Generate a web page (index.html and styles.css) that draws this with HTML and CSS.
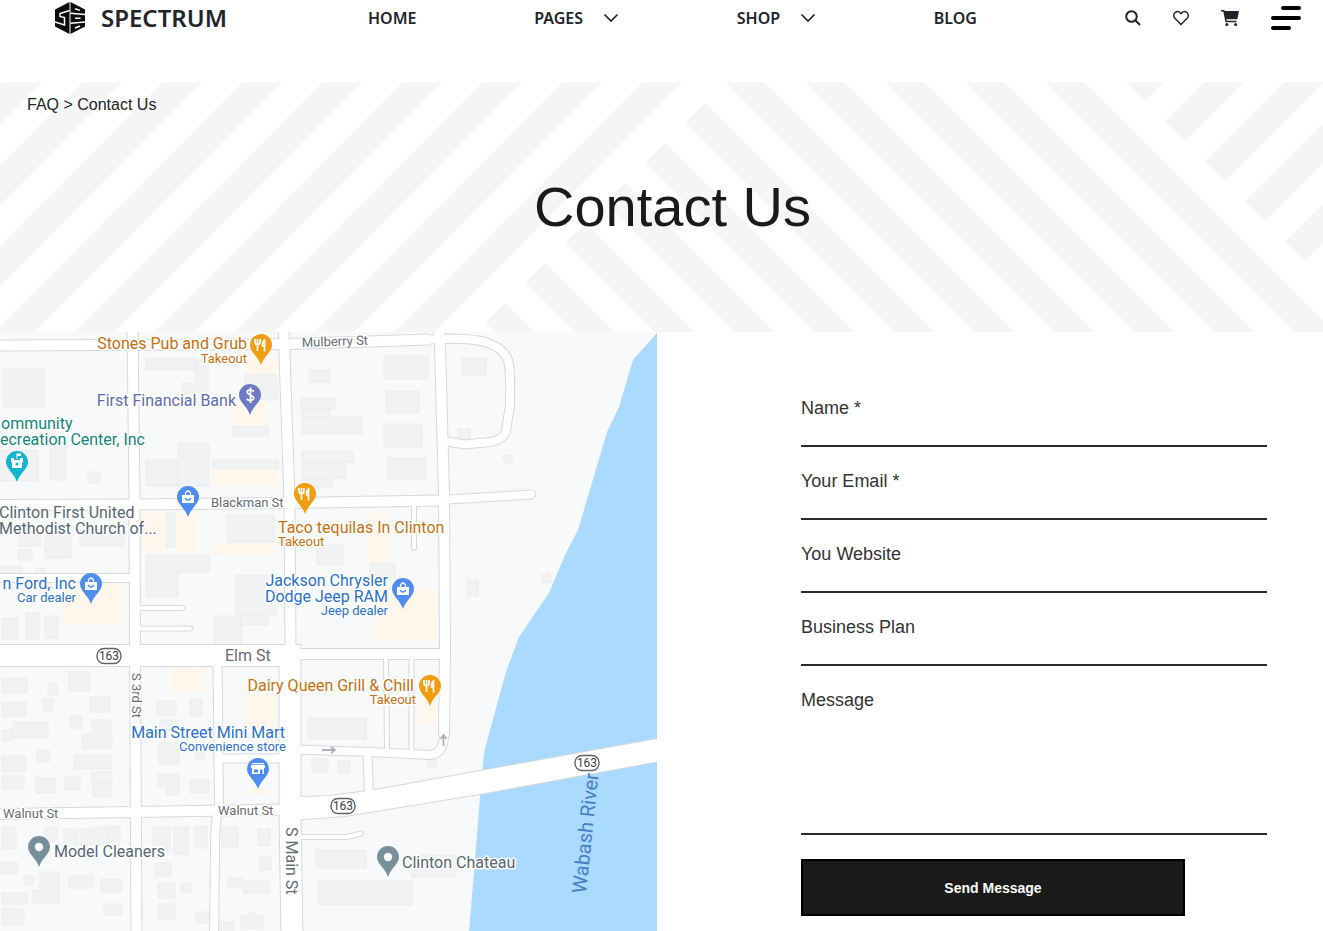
FILE: index.html
```html
<!DOCTYPE html>
<html lang="en">
<head>
<meta charset="utf-8">
<meta name="viewport" content="width=device-width, initial-scale=1">
<title>Contact Us - Spectrum</title>
<link rel="stylesheet" href="styles.css">
</head>
<body>
<header class="header">
  <a class="brand" href="#">
    <svg class="brand-mark" viewBox="0 0 30 32" aria-hidden="true">
      <path d="M14.500 0V32L0 24.500V7.500Z M15.500 0 30 7.500V24.500L15.500 32Z"/>
      <path class="cut" d="M14.500 8.500 5 11.500V14.500L9.500 15.500V23L0 20M15.500 11.200 30 12.500M15.500 21.200 30 20M20 6.800 25 8.400M20 16.300H25.500M20 26 25 24"/>
    </svg>
    <span class="brand-name">SPECTRUM</span>
  </a>
  <nav class="nav" aria-label="Main">
    <a class="nav-link" href="#">HOME</a>
    <a class="nav-link" href="#">PAGES
      <svg class="chevron" viewBox="0 0 16 10" aria-hidden="true"><path d="M1.500 1.500 8 8 14.500 1.500"/></svg></a>
    <a class="nav-link" href="#">SHOP
      <svg class="chevron" viewBox="0 0 16 10" aria-hidden="true"><path d="M1.500 1.500 8 8 14.500 1.500"/></svg></a>
    <a class="nav-link" href="#">BLOG</a>
  </nav>
  <div class="tools">
    <button class="tool" type="button" aria-label="Search">
      <svg viewBox="0 0 16 16"><circle class="line thick" cx="6.500" cy="6.500" r="5.300"/><path class="line thick" d="M10.500 10.500 15 15"/></svg>
    </button>
    <button class="tool" type="button" aria-label="Wishlist">
      <svg viewBox="0 0 16 16"><path class="line" d="M8 14.500 1.900 8.300C.3 6.600.4 4 2.100 2.500 3.800 1.100 6.100 1.400 7.500 3L8 3.600 8.500 3C9.900 1.400 12.200 1.100 13.900 2.500 15.600 4 15.700 6.600 14.100 8.300Z"/></svg>
    </button>
    <button class="tool tool-cart" type="button" aria-label="Cart">
      <svg viewBox="0 0 18 16"><path d="M0 0H3.200L3.700 1H18L16.300 9.300H5.400L5.700 10.800H15.500V12.200H4.500L2.300 1.400H0Z"/><circle cx="5.800" cy="14.400" r="1.500"/><circle cx="14.600" cy="14.400" r="1.500"/></svg>
    </button>
    <button class="tool tool-menu" type="button" aria-label="Menu">
      <svg viewBox="0 0 30 24"><path class="bars" d="M12 2H28M2 12H28M2 22H18"/></svg>
    </button>
  </div>
</header>

<section class="hero">
  <svg class="hero-pattern" viewBox="0 0 1323 250" preserveAspectRatio="xMidYMin slice" aria-hidden="true">
    <defs>
      <path id="fall" d="M0 0H39.500L289.500 250H250Z"/>
      <path id="rise" d="M0 0H39.500L-209 250H-248.500Z"/>
      <clipPath id="mid"><path d="M726.500 0H1323V250H476.500Z"/></clipPath>
      <clipPath id="right"><path d="M1126 0H1323V197Z"/></clipPath>
    </defs>
    <use href="#rise" x="3"/><use href="#rise" x="83"/><use href="#rise" x="163"/><use href="#rise" x="243"/><use href="#rise" x="323"/><use href="#rise" x="403"/><use href="#rise" x="483"/><use href="#rise" x="563"/><use href="#rise" x="643"/>
    <g clip-path="url(#mid)">
      <use href="#fall" x="245"/><use href="#fall" x="325"/><use href="#fall" x="405"/><use href="#fall" x="485"/><use href="#fall" x="565"/><use href="#fall" x="645"/><use href="#fall" x="725"/><use href="#fall" x="805"/><use href="#fall" x="885"/><use href="#fall" x="965"/><use href="#fall" x="1045"/>
    </g>
    <g clip-path="url(#right)">
      <use href="#rise" x="1124"/><use href="#rise" x="1204"/><use href="#rise" x="1284"/><use href="#rise" x="1364"/><use href="#rise" x="1444"/>
    </g>
  </svg>
  <nav class="crumbs" aria-label="Breadcrumb"><a href="#">FAQ</a> &gt; Contact Us</nav>
  <h1 class="title">Contact Us</h1>
</section>

<main class="contact">
  <div class="map">
    <svg viewBox="0 332 657 599" preserveAspectRatio="xMinYMin slice" role="img" aria-label="Map of Clinton">
      <defs>
        <g id="pin"><path d="M-11 0A11 11 0 0 1 11 0C11 7 3 11 0 20-3 11-11 7-11 0Z"/></g>
        <g id="food"><use href="#pin" fill="#f09d0f"/><path d="M-6-6V-2.500Q-6-.5-3.500-.5-1-.5-1-2.500V-6M-3.500-6V6M3.500 6.500V-5Q1.500-4 1.500 1H3.500" fill="none" stroke="#fff" stroke-width="1.700"/></g>
        <g id="bag"><use href="#pin" fill="#4f8df0"/><path d="M-6-2H6V6H-6Z" fill="#fff"/><path d="M-2.500-2V-4Q0-8 2.500-4V-2" fill="none" stroke="#fff" stroke-width="1.300"/><path d="M-3 1Q0 5 3 1" fill="none" stroke="#4f8df0" stroke-width="1.300"/></g>
        <g id="dot"><use href="#pin" fill="#78909c"/><circle r="4.200" fill="#fff"/></g>
        <g id="shield"><rect x="-12" y="-7.500" width="24" height="15" rx="7" fill="#fff" stroke="#5f6368" stroke-width="1.400"/></g>
        <g id="roads">
          <g class="street">
            <path d="M-5 345.500 290 344 430 339.500"/>
            <path d="M439 325 440 345 444 495 445 650 444 735"/>
            <path d="M-5 505 135 504.500 290 503 440 500.500"/>
            <path d="M284 654H445"/>
            <path d="M-5 814 135 812 290 809.500"/>
            <path d="M132.500 325 134.500 500 135 650 136.500 940M283.500 325 289.500 500 290.500 650"/>
          </g>
          <path class="avenue" d="M-5 655.500H290V810L292 940"/>
          <path class="lane" d="M430 339.500Q472 337 488 343 503 348 508 360 511 370 510 405L506 431Q503 440 490 442L465 444.500 444 441M440 500 531 494.500M-5 578H135M217.500 660 219 805Q215 820 215 850L214 940M220 758.500H285M295 749.500 370 752 430 755Q444 753 444 735M367.500 754 369 795"/>
          <path class="alley" d="M138 608H182M138 628.500H190M386 658 387 750M411.500 658V750M414 502V548M300 837H345Q352 836 361 833.500"/>
        </g>
        <path id="bridge" d="M292 797.500 330 796 375 790 483 770.500 660 738.500V761L480 794 345 816 292 820Z"/>
      </defs>
      <rect y="332" width="657" height="599" fill="#f8f9fb"/>
      <path fill="#f1f2f3" stroke="#ebecee" d="M3 369h41v38h-41zM0 450h38v31h-38zM50 446h16v34h-16zM88 472h12v11h-12zM146 358h50v12h-50zM195 360h13v32h-13zM182 383h11v10h-11zM245 374h32v26h-32zM232 426h36v10h-36zM146 460h32v26h-32zM178 443h31v43h-31zM212 460h66v9h-66zM309 370h21v12h-21zM301 398h34v11h-34zM302 409h28v9h-28zM302 417h60v17h-60zM302 451h51v11h-51zM302 462h43v16h-43zM302 478h31v9h-31zM384 356h44v23h-44zM386 391h33v22h-33zM384 424h38v23h-38zM388 458h38v21h-38zM462 358h24v17h-24zM458 429h12v10h-12zM503 456l8-1 2 7-8 2zM166 513h10v34h-10zM227 515h47v27h-47zM146 555h63v17h-63zM146 563h32v34h-32zM236 575h40v40h-40zM215 616h26v27h-26zM241 616h27v9h-27zM19 535h22v11h-22zM45 530h26v28h-26zM80 530h44v16h-44zM18 550h14v10h-14zM0 566h22v10h-22zM36 568h9v9h-9zM2 618h15v21h-15zM26 613h13v26h-13zM45 616h13v22h-13zM317 545h26v20h-26zM370 563h25v15h-25zM467 580h11v16h-11zM542 575l8-2 1 9-8 1zM2 678h25v15h-25zM48 683h9v12h-9zM69 672h21v19h-21zM2 702h24v14h-24zM43 699h10v12h-10zM90 697h20v15h-20zM13 722h35v16h-35zM70 716h12v12h-12zM92 720h19v12h-19zM82 734h30v14h-30zM157 701h19v14h-19zM190 699h12v17h-12zM160 720h18v10h-18zM308 718h58v21h-58zM2 730h11v10h-11zM2 756h23v15h-23zM37 750h12v12h-12zM74 755h37v14h-37zM2 776h22v13h-22zM36 778h19v15h-19zM65 776h15v14h-15zM91 772h21v10h-21zM93 782h18v15h-18zM159 743h20v21h-20zM196 752h9v8h-9zM158 774h21v12l-1 9h-12v-9h-8zM190 780h19v13h-19zM312 759h16v13h-16zM338 761h12v12h-12zM2 827h14v22h-14zM45 827h12v14h-12zM64 829h13v20h-13zM80 829h12v16h-12zM94 827h13v18h-13zM109 826h11v19h-11zM0 862h17v12h-17zM24 876h9v9h-9zM40 872h19v31h-26v-13h7zM69 876h24v12h-24zM101 879h20v13h-20zM104 904h17v11h-17zM2 893h25v11h-25zM2 909h22v16h-22zM153 827h17v24h-17zM174 827h14v27h-14zM195 826h12v22h-12zM155 863h16v13h-16zM158 883h17v15h-17zM181 883h10v9h-10zM158 904h17v15h-17zM196 912h12v11h-12zM222 827h16v20h-16zM258 829h12v17h-12zM260 857h11v13h-11zM228 878h14v9h-14zM244 881h25v12h-25zM241 928v-12h6l5-5 5 5h6v12zM220 922h14v12h-14zM316 850h50v18h-50zM412 855h44v22h-44zM319 881h93v24h-93zM428 758h8v8h-8z"/>
      <path fill="#fff6ec" d="M245 358h32v16h-32zM232 402h36v24h-36zM212 469h66v17h-66zM142 513h24v38h-24zM176 513h22v40h-22zM212 543h62v12h-62zM62 582h62v43h-62zM367 513h22v50h-22zM372 588h64v52h-64zM170 668h33v24h-33zM245 694h30v36h-30zM419 700h17v26h-17zM248 788h20v7h-20z"/>
      <path fill="#aadaff" d="M657 333 633 360 619 407 607 432 578 530 565 555 549 593 519 637 506 672 490 730 484 753 480 797 475 860 469 932H657Z"/>
      <g class="roads-edge"><use href="#roads"/><use href="#bridge"/></g>
      <g class="roads-fill"><use href="#roads"/></g>
      <use href="#bridge" fill="#fff"/>
      <path d="M322 750H335M331 747 335 750 331 753M443.500 746V735M440.500 739 443.500 735 446.500 739" fill="none" stroke="#aeb1b5" stroke-width="1.800"/>

      <use href="#food" x="261" y="345"/><use href="#food" x="305" y="494"/><use href="#food" x="430" y="686"/>
      <use href="#bag" x="188" y="497"/><use href="#bag" x="91" y="584"/><use href="#bag" x="403" y="589"/>
      <use href="#dot" x="39" y="847"/><use href="#dot" x="388" y="857"/>
      <use href="#pin" x="250" y="395" fill="#6f79c4"/>
      <path d="M254 391.500Q250.500 389 248 390.500 245.500 393 250.500 395 255 397 253 399.500 250 401.500 246.500 399M250.500 387.500V403" fill="none" stroke="#fff" stroke-width="1.800"/>
      <use href="#pin" x="17" y="462" fill="#12b5cb"/>
      <path d="M11 458H14V460H20V458H23V462L22 463V468H12V463L11 462ZM16.500 459V453.500H21V456H17.500V459Z" fill="#fff"/><circle cx="17" cy="464" r="1.600" fill="#12b5cb"/>
      <use href="#pin" x="258" y="769" fill="#4f8df0"/>
      <path d="M252 763H264V764.200H252ZM251 765H265V768H251ZM252 768H264V774H252Z" fill="#fff"/><path d="M254 769.500H258V772.500H254ZM260 769.500H262.500V774H260Z" fill="#4f8df0"/>

      <g class="place food-text">
        <text x="247" y="349" text-anchor="end">Stones Pub and Grub</text>
        <text class="small" x="247" y="363" text-anchor="end">Takeout</text>
        <text x="278" y="533">Taco tequilas In Clinton</text>
        <text class="small" x="278" y="546">Takeout</text>
        <text x="414" y="691" text-anchor="end">Dairy Queen Grill &amp; Chill</text>
        <text class="small" x="416" y="704" text-anchor="end">Takeout</text>
      </g>
      <g class="place bank-text"><text x="236" y="406" text-anchor="end">First Financial Bank</text></g>
      <g class="place civic-text">
        <text x="1" y="429">ommunity</text><text x="0" y="445">ecreation Center, Inc</text>
      </g>
      <g class="place shop-text">
        <text x="388" y="586" text-anchor="end">Jackson Chrysler</text>
        <text x="388" y="602" text-anchor="end">Dodge Jeep RAM</text>
        <text class="small" x="388" y="615" text-anchor="end">Jeep dealer</text>
        <text x="76" y="589" text-anchor="end">n Ford, Inc</text>
        <text class="small" x="76" y="602" text-anchor="end">Car dealer</text>
        <text x="285" y="738" text-anchor="end">Main Street Mini Mart</text>
        <text class="small" x="286" y="751" text-anchor="end">Convenience store</text>
      </g>
      <g class="place plain-text">
        <text x="-1" y="518">Clinton First United</text>
        <text x="-1" y="534">Methodist Church of...</text>
        <text x="54" y="857">Model Cleaners</text>
        <text x="402" y="868">Clinton Chateau</text>
      </g>
      <g class="place street-text">
        <text class="small" x="302" y="347" transform="rotate(-2 302 347)">Mulberry St</text>
        <text class="small" x="211" y="507">Blackman St</text>
        <text x="225" y="661">Elm St</text>
        <text class="small" x="3" y="818">Walnut St</text>
        <text class="small" x="218" y="815">Walnut St</text>
        <text class="small" transform="translate(132 673) rotate(90)">S 3rd St</text>
        <text transform="translate(286 827) rotate(90)">S Main St</text>
      </g>
      <text class="river-text" transform="translate(586 894) rotate(-84)">Wabash River</text>
      <g class="route-text">
        <use href="#shield" x="109" y="656"/><text x="109" y="660" text-anchor="middle">163</text>
        <use href="#shield" x="343" y="806"/><text x="343" y="810" text-anchor="middle">163</text>
        <use href="#shield" x="587" y="763"/><text x="587" y="767" text-anchor="middle">163</text>
      </g>
    </svg>
  </div>

  <form class="form">
    <div class="field"><label for="name">Name *</label><input id="name" type="text" required></div>
    <div class="field"><label for="email">Your Email *</label><input id="email" type="email" required></div>
    <div class="field"><label for="website">You Website</label><input id="website" type="text"></div>
    <div class="field"><label for="plan">Business Plan</label><input id="plan" type="text"></div>
    <div class="field"><label for="message">Message</label><textarea id="message"></textarea></div>
    <button class="submit" type="submit">Send Message</button>
  </form>
</main>
</body>
</html>
```

FILE: styles.css
```css
* { box-sizing: border-box; }

body {
  margin: 0;
  background: #fff;
  color: #212529;
  font-family: "Liberation Sans", Arial, sans-serif;
}

a { color: inherit; text-decoration: none; }

/* Header */
.header {
  display: flex;
  align-items: center;
  padding: 0 22px 46px 55px;
  height: 82px;
  font-family: "Noto Sans", sans-serif;
}

.brand {
  display: flex;
  align-items: center;
  gap: 16px;
  flex: 0 0 313px;
}

.brand-mark { width: 30px; height: 32px; fill: #0c0c0c; }
.brand-mark .cut { fill: none; stroke: #fff; stroke-width: 1.5; }
.brand-name { font-size: 24px; font-weight: 600; line-height: 32px; }

.nav {
  display: flex;
  justify-content: space-between;
  flex: 1;
}

.nav-link {
  display: flex;
  align-items: center;
  gap: 20px;
  font-size: 16px;
  font-weight: 600;
  line-height: 24px;
}

.chevron { width: 16px; height: 10px; fill: none; stroke: #212529; stroke-width: 1.7; }

.tools {
  display: flex;
  align-items: center;
  justify-content: flex-end;
  gap: 32px;
  flex: 0 0 324px;
}

.tool {
  display: flex;
  padding: 0;
  border: 0;
  background: none;
  cursor: pointer;
}

.tool svg { width: 16px; height: 16px; fill: #212529; }
.tool .line { fill: none; stroke: #212529; stroke-width: 1.5; }
.tool .thick { stroke-width: 2; }
.tool-cart svg { width: 18px; }
.tool-menu svg { width: 30px; height: 24px; }
.tool .bars { fill: none; stroke: #000; stroke-width: 4; stroke-linecap: round; }

/* Hero */
.hero {
  position: relative;
  min-height: 250px;
  padding: 12px 5px 64px 27px;
  overflow: hidden;
}

.hero-pattern {
  position: absolute;
  inset: 0;
  width: 100%;
  height: 100%;
  fill: #f5f5f5;
}

.crumbs { position: relative; font-size: 16px; line-height: 22px; }

.title {
  position: relative;
  margin: 58px 0 0;
  color: #1a1a1a;
  font-size: 56px;
  font-weight: 400;
  line-height: 66px;
  text-align: center;
}

/* Map and form */
.contact {
  display: grid;
  grid-template-columns: 657fr 666fr;
}

.map { position: relative; min-height: 320px; overflow: hidden; font-family: Roboto, sans-serif; }
.map svg { position: absolute; inset: 0; width: 100%; height: 100%; }

/* Roads are drawn twice: a wider grey edge, then the white surface */
.roads-edge { --edge: 2px; fill: none; stroke: #d6d8db; stroke-width: 2px; }
.roads-fill { --edge: 0px; fill: none; stroke: #fff; }
.street { stroke-width: calc(10px + var(--edge)); }
.avenue { stroke-width: calc(21px + var(--edge)); }
.lane { stroke-width: calc(8px + var(--edge)); stroke-linecap: round; }
.alley { stroke-width: calc(4px + var(--edge)); stroke-linecap: round; }

.place text {
  font-size: 16px;
  stroke: #fff;
  stroke-width: 3px;
  stroke-linejoin: round;
  paint-order: stroke;
}
.place .small { font-size: 13px; }
.food-text { fill: #c5700f; }
.bank-text { fill: #5f6ab0; }
.civic-text { fill: #128577; }
.shop-text { fill: #2a70c8; }
.plain-text { fill: #56666f; }
.street-text { fill: #686c71; }
.river-text { font-size: 20px; fill: #4a7fc6; }
.route-text { font-size: 12px; fill: #3c4043; }

.form { padding: 64px 56px 15px 144px; }
.field { display: flex; flex-direction: column; margin-bottom: 22px; }
.field label { color: #333; font-size: 18px; line-height: 24px; }

.field input,
.field textarea {
  width: 100%;
  height: 27px;
  padding: 0;
  border: 0;
  border-bottom: 2px solid #2b2b2b;
  border-radius: 0;
  background: none;
  font: inherit;
  font-size: 18px;
  resize: none;
  outline: 0;
}
.field textarea { height: 123px; }

.submit {
  display: block;
  width: 384px;
  max-width: 100%;
  height: 57px;
  margin-top: 24px;
  border: 2px solid #000;
  background: #1a1a1a;
  color: #fff;
  font: 700 14px "Liberation Sans", Arial, sans-serif;
  cursor: pointer;
}
```
